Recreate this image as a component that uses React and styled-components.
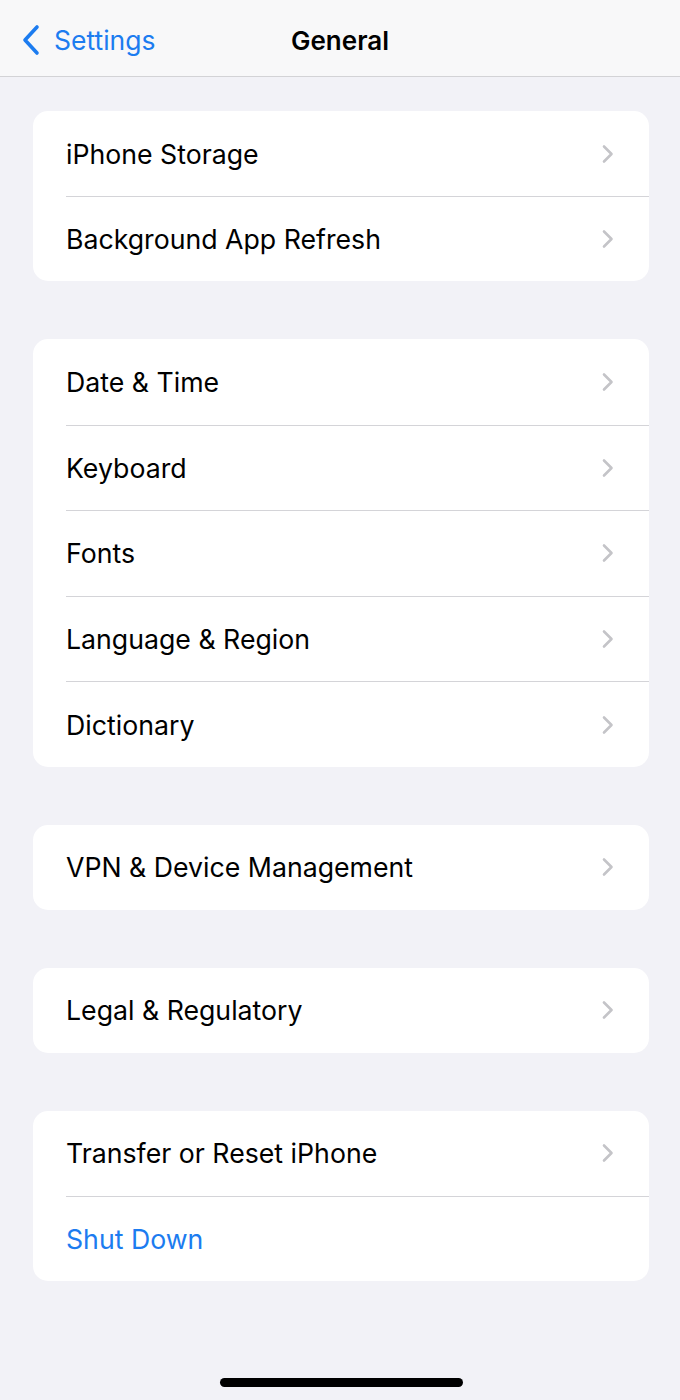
import React from "react";
import styled, { createGlobalStyle } from "styled-components";

const Global = createGlobalStyle`
  html, body { margin: 0; padding: 0; background: #f2f2f7; }
  body { font-family: Inter, "Noto Sans", "Liberation Sans", sans-serif; -webkit-font-smoothing: antialiased; }
`;

const Page = styled.div`
  width: 680px;
  min-height: 1400px;
  background: #f2f2f7;
  display: flex;
  flex-direction: column;
  position: relative;
`;

const NavBar = styled.header`
  height: 77px;
  background: #f8f8f9;
  border-bottom: 1px solid #d3d3d6;
  display: grid;
  grid-template-columns: 1fr auto 1fr;
  align-items: center;
  padding: 4px 0 0 0;
  box-sizing: border-box;
`;

const Back = styled.div`
  display: flex;
  align-items: center;
  gap: 13px;
  padding-left: 21px;
  color: #1c7cf0;
  font-size: 26.5px;
`;

const Title = styled.div`
  font-size: 26px;
  font-weight: 600;
  color: #000;
`;

const Content = styled.main`
  display: flex;
  flex-direction: column;
  gap: 58px;
  padding: 34px 31px 0 33px;
`;

const Card = styled.section`
  background: #fff;
  border-radius: 15px;
  overflow: hidden;
  display: flex;
  flex-direction: column;
`;

const Row = styled.div`
  padding-left: 33px;
  display: flex;
`;

const RowInner = styled.div`
  flex: 1;
  height: ${p => p.$h}px;
  display: flex;
  align-items: center;
  justify-content: space-between;
  padding-right: 34px;
  border-top: ${p => (p.$first ? "none" : "1px solid #d4d4d8")};
  box-sizing: border-box;
`;

const Label = styled.span`
  font-size: 26.7px;
  color: ${p => (p.$blue ? "#1c7cf0" : "#000")};
`;

const HomeBar = styled.div`
  position: absolute;
  left: 220px;
  top: 1378px;
  width: 243px;
  height: 9px;
  border-radius: 5px;
  background: #000;
`;

const Chevron = () => (
  <svg width="14" height="20" viewBox="0 0 14 20">
    <path d="M3 2.5 L10.5 10 L3 17.5" fill="none" stroke="#c4c4c8" strokeWidth="2.6" strokeLinecap="round" strokeLinejoin="round" />
  </svg>
);

const BackChevron = () => (
  <svg width="20" height="32" viewBox="0 0 20 32">
    <path d="M16 3 L4 16 L16 29" fill="none" stroke="#1c7cf0" strokeWidth="3.6" strokeLinecap="round" strokeLinejoin="round" />
  </svg>
);

const groups = [
  [{ t: "iPhone Storage" }, { t: "Background App Refresh" }],
  [{ t: "Date & Time" }, { t: "Keyboard" }, { t: "Fonts" }, { t: "Language & Region" }, { t: "Dictionary" }],
  [{ t: "VPN & Device Management" }],
  [{ t: "Legal & Regulatory" }],
  [{ t: "Transfer or Reset iPhone" }, { t: "Shut Down", blue: true, noChevron: true }],
];

export default function App() {
  return (
    <Page>
      <Global />
      <NavBar>
        <Back>
          <BackChevron />
          <span>Settings</span>
        </Back>
        <Title>General</Title>
        <div />
      </NavBar>
      <Content>
        {groups.map((g, gi) => (
          <Card key={gi}>
            {g.map((r, ri) => (
              <Row key={ri}>
                <RowInner $first={ri === 0} $h={g.length === 5 ? 85.6 : 85}>
                  <Label $blue={r.blue}>{r.t}</Label>
                  {!r.noChevron && <Chevron />}
                </RowInner>
              </Row>
            ))}
          </Card>
        ))}
      </Content>
      <HomeBar />
    </Page>
  );
}
